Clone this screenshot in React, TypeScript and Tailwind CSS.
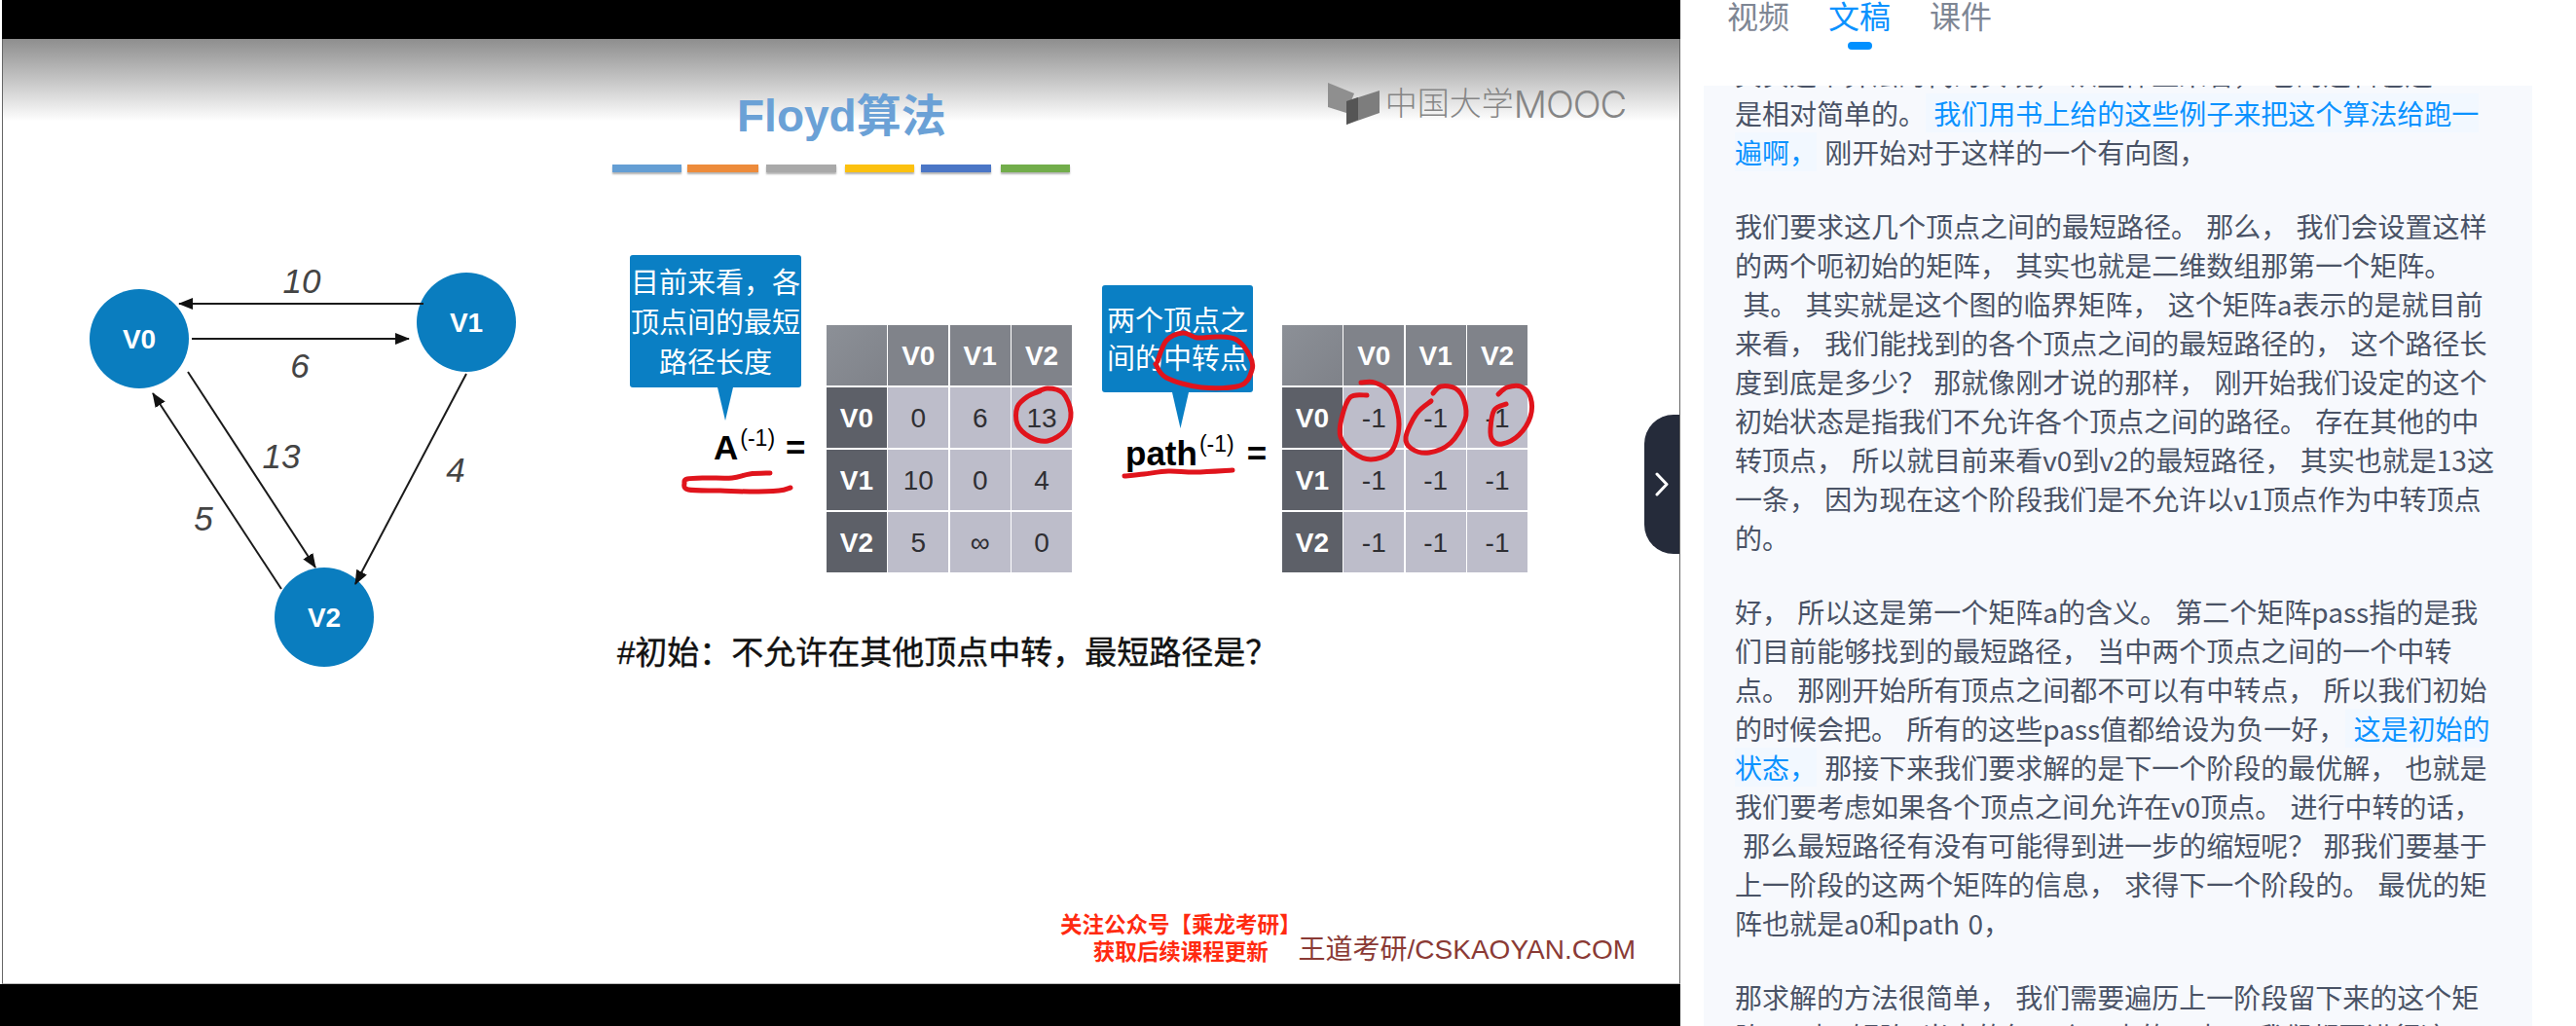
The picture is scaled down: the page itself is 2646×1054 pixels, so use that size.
const smooth = (pts: number[][]) => {
  let d = `M${pts[0][0]} ${pts[0][1]}`;
  for (let i = 0; i < pts.length - 1; i++) {
    const p0 = pts[i - 1] || pts[i];
    const p1 = pts[i];
    const p2 = pts[i + 1];
    const p3 = pts[i + 2] || p2;
    const c1x = p1[0] + (p2[0] - p0[0]) / 6;
    const c1y = p1[1] + (p2[1] - p0[1]) / 6;
    const c2x = p2[0] - (p3[0] - p1[0]) / 6;
    const c2y = p2[1] - (p3[1] - p1[1]) / 6;
    d += ` C${c1x} ${c1y} ${c2x} ${c2y} ${p2[0]} ${p2[1]}`;
  }
  return d;
};

const strokes = [
  // 13
  [[1062, 404], [1076, 399], [1092, 404], [1100, 424], [1094, 442], [1076, 453], [1058, 449], [1045, 436], [1045, 418], [1056, 407], [1068, 402]],
  // A underline
  [[791, 486], [770, 487], [752, 491], [725, 491], [706, 492], [703, 496], [707, 503], [740, 504], [770, 505], [800, 504], [812, 501]],
  // path underline
  [[1155, 489], [1175, 487], [1200, 484], [1228, 485], [1266, 483]],
  // 中转点
  [[1189, 371], [1198, 350], [1215, 342], [1230, 347], [1250, 346], [1270, 349], [1284, 366], [1286, 380], [1274, 396], [1234, 398], [1198, 388], [1187, 374]],
  // -1 marks
  [[1404, 406], [1387, 408], [1378, 430], [1377, 449], [1390, 465], [1408, 472], [1428, 465], [1436, 446], [1436, 425], [1428, 403], [1412, 393], [1398, 393]],
  [[1470, 412], [1455, 425], [1444, 449], [1450, 461], [1468, 465], [1490, 455], [1505, 431], [1504, 412], [1495, 399], [1480, 397], [1472, 404]],
  [[1547, 415], [1535, 421], [1531, 440], [1533, 452], [1543, 456], [1560, 447], [1572, 428], [1572, 408], [1562, 397], [1548, 398], [1539, 405]],
];

function Graph() {
  return (
    <svg width="626" height="430" viewBox="3 262 626 430" className="shrink-0">
      <defs>
        <marker id="head" markerUnits="userSpaceOnUse" markerWidth="15" markerHeight="12" refX="14" refY="6" orient="auto">
          <path d="M0 0L15 6L0 12z" fill="#111" />
        </marker>
      </defs>
      <ellipse cx="143" cy="348" rx="51" ry="51" fill="#0a7dbf" />
      <ellipse cx="479" cy="331" rx="51" ry="51" fill="#0a7dbf" />
      <ellipse cx="333" cy="634" rx="51" ry="51" fill="#0a7dbf" />
      <g stroke="#1a1a1a" strokeWidth="2">
        <line x1="435" y1="312" x2="184" y2="312" markerEnd="url(#head)" />
        <line x1="197" y1="348" x2="420" y2="348" markerEnd="url(#head)" />
        <line x1="193" y1="382" x2="324" y2="583" markerEnd="url(#head)" />
        <line x1="289" y1="605" x2="157" y2="404" markerEnd="url(#head)" />
        <line x1="479" y1="384" x2="365" y2="600" markerEnd="url(#head)" />
      </g>
      <g fill="#fff" fontSize="28" fontWeight="700" textAnchor="middle">
        <text x="143" y="358">V0</text>
        <text x="479" y="341">V1</text>
        <text x="333" y="644">V2</text>
      </g>
      <g fill="#444" fontSize="35" fontStyle="italic" textAnchor="middle">
        <text x="310" y="301">10</text>
        <text x="308" y="388">6</text>
        <text x="289" y="481">13</text>
        <text x="468" y="495">4</text>
        <text x="209" y="545">5</text>
      </g>
    </svg>
  );
}

function Matrix({ rows }: { rows: string[][] }) {
  const head = ['V0', 'V1', 'V2'];
  return (
    <div className="grid grid-cols-4 grid-rows-4 gap-[1.5px] w-[252px] h-[254px] text-[28px] leading-none">
      <div className="bg-gradient-to-br from-[#8c9097] to-[#7f8289]" />
      {head.map((h) => (
        <div key={h} className="bg-[#80838a] text-white font-bold flex items-center justify-center pt-[1px]">{h}</div>
      ))}
      {rows.map((row, i) => (
        <div key={i} className="contents">
          <div className="bg-[#5d6068] text-white font-bold flex items-center justify-center pt-[2px]">{head[i]}</div>
          {row.map((c, j) => (
            <div key={j} className="bg-[#bdbdca] text-[#2f2f33] flex items-center justify-center pt-[2px]">{c}</div>
          ))}
        </div>
      ))}
    </div>
  );
}

function Slide() {
  return (
    <div className="relative flex-1 flex flex-col ml-[2px] border-l border-r border-[#666] border-b-[#bbb] border-b bg-white">
      {/* header */}
      <div className="flex items-start h-[124px] shrink-0 bg-gradient-to-b from-[#8e8e8e] to-white to-[68%]">
        <div className="ml-[754px] mt-[49px] text-[46px] leading-[60px] font-bold text-[#6ba1d6] whitespace-nowrap">Floyd算法</div>
        <div className="ml-[392px] mt-[45px] flex items-center text-[#858585] whitespace-nowrap">
          <svg width="54" height="44" viewBox="1365 85 54 44">
            <path d="M1365 85L1392 96L1384 116L1365 110z" fill="#8f8f8f" />
            <path d="M1384 104L1418 93V116L1384 128z" fill="#7d7d7d" />
            <path d="M1384 104L1396 100V123L1384 128z" fill="#555" />
          </svg>
          <span className="ml-[5px] text-[33px] leading-[44px] font-light">中国大学</span>
          <span className="text-[38px] leading-[44px] font-light font-['Inter',sans-serif] tracking-[-1px]">MOOC</span>
        </div>
      </div>
      {/* colour bars */}
      <div className="flex ml-[626px] h-[8px] mt-[5px] shrink-0">
        <div className="w-[71px] bg-[#649ed4] shadow-[0_2px_2px_rgba(0,0,0,0.3)]" />
        <div className="w-[73px] ml-[6px] bg-[#ed8b3b] shadow-[0_2px_2px_rgba(0,0,0,0.3)]" />
        <div className="w-[72px] ml-[8px] bg-[#a9a9a9] shadow-[0_2px_2px_rgba(0,0,0,0.3)]" />
        <div className="w-[71px] ml-[9px] bg-[#fcc10f] shadow-[0_2px_2px_rgba(0,0,0,0.3)]" />
        <div className="w-[72px] ml-[7px] bg-[#4b76c6] shadow-[0_2px_2px_rgba(0,0,0,0.3)]" />
        <div className="w-[71px] ml-[10px] bg-[#72ad4b] shadow-[0_2px_2px_rgba(0,0,0,0.3)]" />
      </div>
      {/* body */}
      <div className="flex items-start mt-[85px]">
        <Graph />
        <div className="flex flex-col">
          <div className="flex items-start ml-[18px]">
            <div className="w-[202px] shrink-0 flex flex-col items-start">
              <div className="w-[176px] h-[136px] pt-[4px] rounded-[3px] bg-[#0a7fc4] text-white text-[29px] leading-[41px] text-center flex items-center justify-center whitespace-nowrap">
                <div>目前来看，各<br />顶点间的最短<br />路径长度</div>
              </div>
              <div className="ml-[90px] w-[16px] h-[34px] bg-[#0a7fc4] [clip-path:polygon(0_0,100%_0,50%_100%)]" />
              <div className="pl-[86px] mt-[2px] h-[52px] leading-[52px] whitespace-nowrap text-black">
                <span className="text-[35px] font-bold">A</span>
                <span className="relative -top-[14px] text-[23px] ml-[2px]">(-1)</span>
                <span className="text-[35px] font-bold ml-[11px]">=</span>
              </div>
            </div>
            <div className="mt-[72px]"><Matrix rows={[['0', '6', '13'], ['10', '0', '4'], ['5', '∞', '0']]} /></div>
            <div className="w-[185px] ml-[31px] mt-[31px] shrink-0 flex flex-col items-start">
              <div className="w-[155px] h-[110px] pt-[3px] rounded-[3px] bg-[#0a7fc4] text-white text-[29px] leading-[39px] text-center flex items-center justify-center whitespace-nowrap">
                <div>两个顶点之<br />间的中转点</div>
              </div>
              <div className="ml-[72px] w-[17px] h-[37px] bg-[#0a7fc4] [clip-path:polygon(0_0,100%_0,50%_100%)]" />
              <div className="pl-[24px] h-[52px] leading-[52px] whitespace-nowrap text-black">
                <span className="text-[35px] font-bold">path</span>
                <span className="relative -top-[14px] text-[23px] ml-[2px]">(-1)</span>
                <span className="text-[35px] font-bold ml-[13px]">=</span>
              </div>
            </div>
            <div className="mt-[72px]"><Matrix rows={[['-1', '-1', '-1'], ['-1', '-1', '-1'], ['-1', '-1', '-1']]} /></div>
          </div>
          <div className="ml-[5px] mt-[63px] text-[33px] leading-[40px] text-[#111] [-webkit-text-stroke:0.4px_#111] whitespace-nowrap">#初始：不允许在其他顶点中转，最短路径是？</div>
        </div>
      </div>
      {/* footer */}
      <div className="mt-auto flex items-end justify-end pr-[45px] pb-[17px]">
        <div className="text-[#ff2a10] text-[22.5px] leading-[28px] font-bold whitespace-nowrap text-center">
          关注公众号【乘龙考研】<br />获取后续课程更新
        </div>
        <div className="-ml-[3px] text-[#8a3a35] text-[28px] leading-[34px] whitespace-nowrap">王道考研/CSKAOYAN.COM</div>
      </div>
      {/* pen marks */}
      <svg width="1723" height="970" viewBox="3 40 1723 970" className="absolute left-0 top-0 pointer-events-none">
        {strokes.map((s, i) => (
          <path key={i} d={smooth(s)} fill="none" stroke="#e0141c" strokeWidth="5" strokeLinecap="round" />
        ))}
      </svg>
      {/* collapse handle */}
      <button className="absolute right-0 top-[386px] w-[36px] h-[143px] rounded-l-[30px] bg-[#252b3a] flex items-center justify-center">
        <svg width="14" height="25" viewBox="0 0 14 25" fill="none" stroke="#fff" strokeWidth="3" strokeLinecap="round" strokeLinejoin="round">
          <path d="M2 2L12 12.5L2 23" />
        </svg>
      </button>
    </div>
  );
}

const Blue = ({ children }: { children: string }) => (
  <span className="inline-block h-[40px] bg-[#f2f8ff] text-[#0b92ff]">{children}</span>
);

const Line = ({ children }: { children: React.ReactNode }) => (
  <div className="h-[40px] leading-[40px] whitespace-pre">{children}</div>
);

function Transcript() {
  return (
    <div className="ml-[24px] w-[851px] flex-1 min-h-0 overflow-hidden bg-[#f7f9fd] px-[32px] text-[28px] text-[#4a5366] [word-spacing:2px]">
      <div className="-mt-[32px]">
        <Line>其实这个算法的代码实现， 从整体上来看， 它的逻辑也还</Line>
        <Line>是相对简单的。<Blue> 我们用书上给的这些例子来把这个算法给跑一</Blue></Line>
        <Line><Blue>遍啊，</Blue> 刚开始对于这样的一个有向图，</Line>
      </div>
      <div className="mt-[36px]">
        <Line>我们要求这几个顶点之间的最短路径。 那么， 我们会设置这样</Line>
        <Line>的两个呃初始的矩阵， 其实也就是二维数组那第一个矩阵。</Line>
        <Line> 其。 其实就是这个图的临界矩阵， 这个矩阵a表示的是就目前</Line>
        <Line>来看， 我们能找到的各个顶点之间的最短路径的， 这个路径长</Line>
        <Line>度到底是多少？ 那就像刚才说的那样， 刚开始我们设定的这个</Line>
        <Line>初始状态是指我们不允许各个顶点之间的路径。 存在其他的中</Line>
        <Line>转顶点， 所以就目前来看v0到v2的最短路径， 其实也就是13这</Line>
        <Line>一条， 因为现在这个阶段我们是不允许以v1顶点作为中转顶点</Line>
        <Line>的。</Line>
      </div>
      <div className="mt-[36px]">
        <Line>好， 所以这是第一个矩阵a的含义。 第二个矩阵pass指的是我</Line>
        <Line>们目前能够找到的最短路径， 当中两个顶点之间的一个中转</Line>
        <Line>点。 那刚开始所有顶点之间都不可以有中转点， 所以我们初始</Line>
        <Line>的时候会把。 所有的这些pass值都给设为负一好，<Blue> 这是初始的</Blue></Line>
        <Line><Blue>状态，</Blue> 那接下来我们要求解的是下一个阶段的最优解， 也就是</Line>
        <Line>我们要考虑如果各个顶点之间允许在v0顶点。 进行中转的话，</Line>
        <Line> 那么最短路径有没有可能得到进一步的缩短呢？ 那我们要基于</Line>
        <Line>上一阶段的这两个矩阵的信息， 求得下一个阶段的。 最优的矩</Line>
        <Line>阵也就是a0和path 0，</Line>
      </div>
      <div className="mt-[36px]">
        <Line>那求解的方法很简单， 我们需要遍历上一阶段留下来的这个矩</Line>
        <Line>阵， 对于矩阵a当中的每一个元素的元素， 我们都要进行这</Line>
      </div>
    </div>
  );
}

export default function App() {
  return (
    <div className="flex w-[2646px] h-[1054px] overflow-hidden bg-white font-['Liberation_Sans','Noto_Sans_CJK_SC',sans-serif]">
      <div className="w-[1726px] shrink-0 flex flex-col">
        <div className="h-[40px] ml-[2px] bg-black shrink-0" />
        <Slide />
        <div className="h-[43px] bg-black shrink-0" />
      </div>
      <div className="flex-1 min-w-0 flex flex-col">
        <div className="relative z-10 bg-white flex gap-[40px] pl-[48px] text-[32px] leading-[32px] text-[#7e8694] h-[88px] shrink-0 font-['Noto_Sans_CJK_SC',sans-serif]">
          <div className="flex flex-col items-center"><span className="-mt-[1px]">视频</span></div>
          <div className="flex flex-col items-center text-[#0b92ff]">
            <span className="-mt-[1px]">文稿</span>
            <div className="w-[25px] h-[8px] mt-[12px] rounded-full bg-[#0090ff]" />
          </div>
          <div className="flex flex-col items-center"><span className="-mt-[1px]">课件</span></div>
        </div>
        <div className="flex-1 min-h-0 flex flex-col font-['Noto_Sans_CJK_SC',sans-serif]">
          <Transcript />
        </div>
      </div>
    </div>
  );
}
